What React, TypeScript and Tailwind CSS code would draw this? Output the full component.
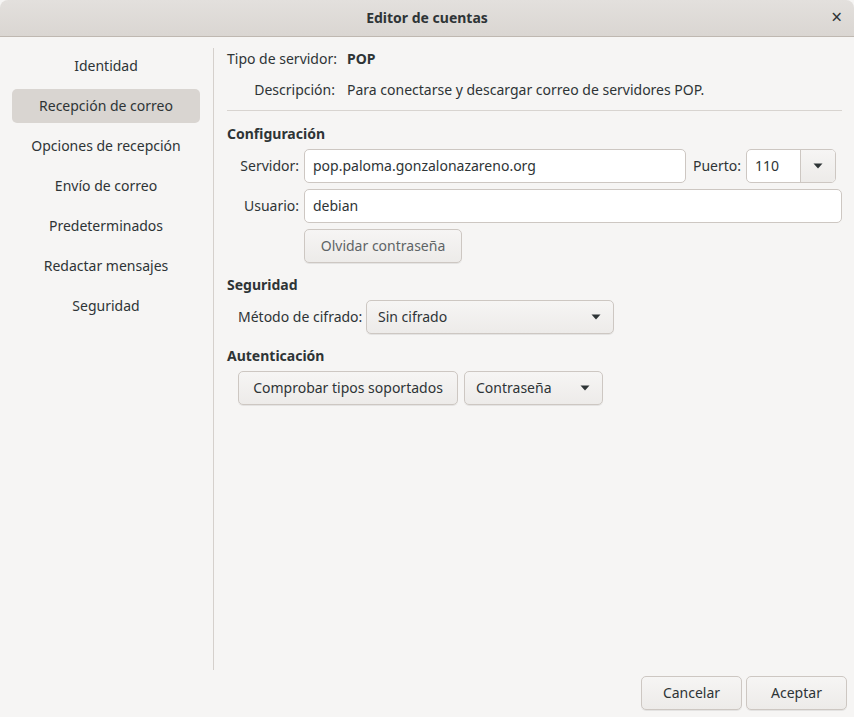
import React from 'react';

const items = ['Identidad', 'Recepción de correo', 'Opciones de recepción', 'Envío de correo', 'Predeterminados', 'Redactar mensajes', 'Seguridad'];

const Arrow = () => (
  <svg width="10" height="6" viewBox="0 0 10 6" className="shrink-0"><path d="M0.5 0.5 L9.5 0.5 L5 5.5 Z" fill="#2e3436" /></svg>
);

const btn = "h-[34px] flex items-center whitespace-nowrap border border-[#cdc7c2] rounded-[5px] bg-gradient-to-b from-[#f6f5f4] to-[#edebe9] shadow-[0_1px_0_rgba(0,0,0,0.07)] text-[#2e3436]";
const entry = "h-[34px] flex items-center border border-[#cdc7c2] rounded-[5px] bg-white px-[8px] text-[#2e3436]";

export default function App() {
  return (
    <div className="w-[854px] h-[717px] flex flex-col bg-[#f6f5f4] text-[#2e3436] text-[14px] whitespace-nowrap overflow-hidden" style={{ fontFamily: '"Noto Sans", "Open Sans", sans-serif' }}>
      <div className="h-[37px] shrink-0 relative flex items-center justify-center pb-[1px] bg-gradient-to-b from-[#e3e0dd] to-[#dad6d2] border-b border-[#bfb8b1] rounded-t-[8px]">
        <span className="font-bold">Editor de cuentas</span>
        <span className="absolute right-[12px] top-[5px] text-[19px] leading-[24px]">×</span>
      </div>
      <div className="flex flex-1 pt-[10px]">
        <div className="w-[214px] shrink-0 border-r border-[#d5d0cc] flex flex-col pt-[1px] pl-[12px] pr-[13px] mt-[1px]">
          {items.map((t, i) => (
            <div key={t} className={`h-[34px] mb-[6px] flex items-center justify-center rounded-[5px] pb-[1px] ${i === 1 ? 'bg-[#d9d5d1]' : ''}`}>{t}</div>
          ))}
        </div>
        <div className="flex-1 pl-[13px] pr-[12px] flex flex-col">
          <div className="flex items-center h-[22px]">
            <span className="w-[108px] text-right">Tipo de servidor:</span>
            <span className="ml-[12px] font-bold">POP</span>
          </div>
          <div className="flex items-center h-[22px] mt-[9px]">
            <span className="w-[108px] text-right">Descripción:</span>
            <span className="ml-[12px]">Para conectarse y descargar correo de servidores POP.</span>
          </div>
          <div className="border-t border-[#d8d4d0] mt-[10px]" />
          <div className="font-bold mt-[11px] h-[22px] flex items-center">Configuración</div>
          <div className="flex items-center mt-[5px]">
            <span className="w-[72px] text-right pb-[1px]">Servidor:</span>
            <div className={`${entry} ml-[5px] w-[382px] pb-[1px]`}>pop.paloma.gonzalonazareno.org</div>
            <span className="ml-[7px] w-[48px] pb-[1px]">Puerto:</span>
            <div className="ml-[5px] h-[34px] w-[90px] flex border border-[#cdc7c2] rounded-[5px] bg-white overflow-hidden">
              <div className="flex-1 flex items-center px-[8px] pb-[1px]">110</div>
              <div className="w-[35px] border-l border-[#cdc7c2] bg-gradient-to-b from-[#f6f5f4] to-[#edebe9] flex items-center justify-center"><Arrow /></div>
            </div>
          </div>
          <div className="flex items-center mt-[6px]">
            <span className="w-[72px] text-right pb-[1px]">Usuario:</span>
            <div className={`${entry} ml-[5px] flex-1 pb-[1px]`}>debian</div>
          </div>
          <div className="flex mt-[6px] pl-[77px]">
            <div className={`${btn} w-[158px] justify-center text-[#5e6466] pb-[1px]`}>Olvidar contraseña</div>
          </div>
          <div className="font-bold mt-[10px] h-[22px] flex items-center">Seguridad</div>
          <div className="flex items-center mt-[5px] pl-[11px]">
            <span className="w-[122px] pb-[1px]">Método de cifrado:</span>
            <div className={`${btn} ml-[6px] w-[248px] justify-between pl-[11px] pr-[12px]`}>
              <span className="pb-[1px]">Sin cifrado</span><Arrow />
            </div>
          </div>
          <div className="font-bold mt-[10px] h-[22px] flex items-center">Autenticación</div>
          <div className="flex items-center mt-[5px] pl-[11px] gap-[6px]">
            <div className={`${btn} w-[220px] justify-center pb-[1px]`}>Comprobar tipos soportados</div>
            <div className={`${btn} w-[139px] justify-between pl-[11px] pr-[12px]`}>
              <span className="pb-[1px]">Contraseña</span><Arrow />
            </div>
          </div>
        </div>
      </div>
      <div className="h-[47px] shrink-0 flex justify-end items-start pt-[6px] pr-[7px] gap-[4px]">
        <div className={`${btn} w-[101px] justify-center pb-[1px]`}>Cancelar</div>
        <div className={`${btn} w-[101px] justify-center pb-[1px]`}>Aceptar</div>
      </div>
    </div>
  );
}
